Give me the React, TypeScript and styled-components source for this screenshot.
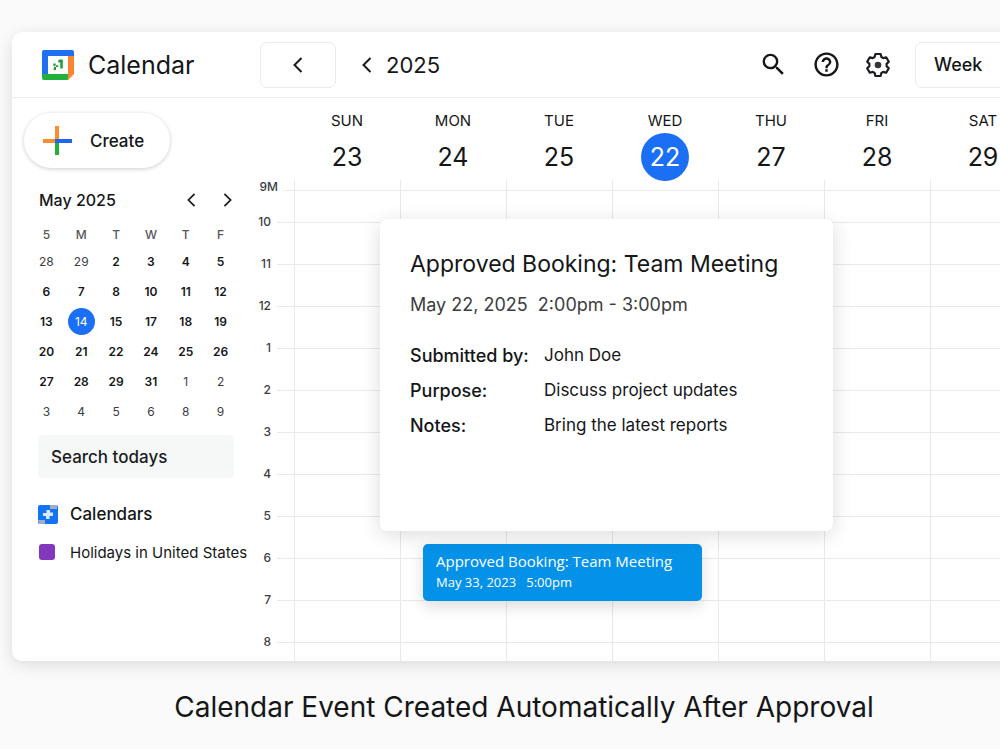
import React from "react";
import styled, { createGlobalStyle, css } from "styled-components";
import { MdSearch, MdHelpOutline } from "react-icons/md";

const FONT = `Inter, "Liberation Sans", sans-serif`;
const BLUE = "#1a6ff5";
const LINE = "#e9e9ea";

const GlobalStyle = createGlobalStyle`
  * { box-sizing: border-box; }
  body {
    margin: 0;
    background: #fafafa;
    color: #151618;
    font-family: ${FONT};
    overflow-x: hidden;
  }
  button, input, select { font: inherit; color: inherit; }
  h1, h2, p, dl, dd { margin: 0; font-weight: 400; }
`;

const Page = styled.div`
  overflow: hidden;
  padding: 32px 0 20px;
`;

/* The window runs past the right edge of the page. */
const Stage = styled.div`
  margin: 0 -36px 0 12px;
`;

const Window = styled.main`
  background: #fff;
  border-radius: 10px;
  box-shadow: 0 4px 16px rgba(0, 0, 0, 0.12);
  overflow: hidden;
`;

const Header = styled.header`
  display: flex;
  align-items: center;
  height: 66px;
  padding-left: 30px;
  border-bottom: 1px solid #eeeeef;
`;

const Brand = styled.div`
  display: flex;
  align-items: center;
  gap: 14px;
  width: 218px;
  flex: none;
`;

const BrandName = styled.h1`
  font-size: 25px;
  line-height: 32px;
`;

const IconButton = styled.button`
  display: grid;
  place-items: center;
  padding: 0;
  border: 0;
  background: none;
  cursor: pointer;
`;

const BoxButton = styled(IconButton)`
  width: 76px;
  height: 46px;
  border: 1px solid #ebebed;
  border-radius: 7px;
  background: #fff;
`;

const YearNav = styled.div`
  display: flex;
  align-items: center;
  gap: 14px;
  margin-left: 26px;
  font-size: 22px;
`;

const Tools = styled.div`
  display: flex;
  align-items: center;
  gap: 24px;
  margin-left: auto;
`;

const ViewSelect = styled.select`
  appearance: none;
  width: 121px;
  height: 46px;
  padding: 0 18px;
  border: 1px solid #ebebed;
  border-radius: 7px 0 0 7px;
  background: #fff;
  font-size: 18px;
  font-weight: 500;
`;

const Content = styled.div`
  display: flex;
`;

const Sidebar = styled.aside`
  width: 238px;
  flex: none;
  padding: 15px 0 0 12px;
`;

const CreateButton = styled.button`
  display: flex;
  align-items: center;
  gap: 18px;
  width: 146px;
  height: 55px;
  padding: 0 18px;
  border: 0;
  border-radius: 28px;
  background: #fff;
  box-shadow: 0 1px 4px rgba(0, 0, 0, 0.2);
  font-size: 17px;
  font-weight: 500;
  cursor: pointer;
`;

const MonthBar = styled.div`
  display: flex;
  align-items: center;
  gap: 27px;
  height: 24px;
  margin: 20px 18px 0 15px;
`;

const MonthName = styled.h2`
  flex: 1;
  font-size: 16px;
  font-weight: 500;
`;

const MiniCalendar = styled.table`
  width: 209px;
  margin: 10px 0 0 5px;
  border-collapse: collapse;
  table-layout: fixed;
  text-align: center;
  font-size: 12px;

  th, td { padding: 0; }
  th { height: 24px; font-weight: 500; color: #55565a; }
  td { height: 30px; }
`;

const MiniDay = styled.span<{ $muted?: boolean; $active?: boolean }>`
  display: grid;
  place-items: center;
  width: 27px;
  height: 27px;
  margin: 0 auto;
  border-radius: 50%;
  font-weight: ${(p) => (p.$muted || p.$active ? 400 : 600)};
  color: ${(p) => (p.$active ? "#fff" : p.$muted ? "#3c3d41" : "#151618")};
  background: ${(p) => (p.$active ? BLUE : "transparent")};
`;

const SearchInput = styled.input`
  display: block;
  width: 196px;
  height: 43px;
  margin: 9px 0 0 14px;
  padding: 0 13px;
  border: 0;
  border-radius: 5px;
  background: #f6f8f8;
  font-size: 17px;
  font-weight: 500;

  &::placeholder { color: #1b1c1f; opacity: 1; }
`;

const CalendarList = styled.ul`
  display: flex;
  flex-direction: column;
  gap: 14px;
  margin: 24px 0 0;
  padding: 0 0 0 14px;
  list-style: none;
`;

const CalendarItem = styled.li<{ $strong?: boolean }>`
  display: grid;
  grid-template-columns: 20px auto;
  column-gap: 12px;
  align-items: center;
  height: 24px;
  white-space: nowrap;
  font-size: ${(p) => (p.$strong ? 17 : 15)}px;
  font-weight: ${(p) => (p.$strong ? 500 : 400)};
`;

const Swatch = styled.span`
  width: 16px;
  height: 16px;
  margin-left: 1px;
  border-radius: 3px;
  background: #8238bd;
`;

const Week = styled.section`
  flex: 1;
  min-width: 0;
`;

const DayHeads = styled.div`
  display: grid;
  grid-template-columns: repeat(7, 1fr);
  height: 82px;
  padding: 13px 0 0 44px;
`;

const DayHead = styled.div`
  display: flex;
  flex-direction: column;
  align-items: center;
  gap: 2px;
  font-size: 15px;
  line-height: 20px;
`;

const DayNumber = styled.span<{ $active?: boolean }>`
  display: grid;
  place-items: center;
  width: 48px;
  height: 48px;
  border-radius: 50%;
  font-size: 25px;
  ${(p) => p.$active && css`background: ${BLUE}; color: #fff;`}
`;

const Schedule = styled.div`
  position: relative;
  display: grid;
  height: 481px;
  overflow: hidden;
`;

const Columns = styled.div`
  grid-area: 1 / 1;
  display: grid;
  grid-template-columns: repeat(7, 1fr);
  padding-left: 44px;
`;

const Column = styled.div`
  border-left: 1px solid ${LINE};
`;

const Hours = styled.div`
  grid-area: 1 / 1;
`;

const Hour = styled.div<{ $first?: boolean }>`
  display: flex;
  align-items: center;
  gap: 6px;
  height: ${(p) => (p.$first ? 21 : 42)}px;

  &::after {
    content: "";
    flex: 1;
    height: 1px;
    background: ${LINE};
  }
`;

const HourLabel = styled.span<{ $first?: boolean }>`
  width: ${(p) => (p.$first ? 28 : 21)}px;
  align-self: ${(p) => (p.$first ? "flex-start" : "center")};
  text-align: right;
  font-size: 12px;
  line-height: 14px;
  font-weight: 500;
  color: #3c3d41;
`;

const EventChip = styled.article`
  position: absolute;
  top: 364px;
  left: 173px;
  width: 279px;
  padding: 6px 13px 9px;
  border-radius: 5px;
  background: #0491e8;
  color: #fff;
  box-shadow: 0 5px 16px rgba(0, 0, 0, 0.14);
  font-family: "Open Sans", "Noto Sans", sans-serif;
  font-size: 13px;
  line-height: 19px;
  white-space: pre;
`;

const EventTitle = styled.p`
  && { font-weight: 500; }
  font-size: 15px;
  line-height: 23px;
`;

const Popup = styled.article`
  position: absolute;
  top: 39px;
  left: 130px;
  width: 453px;
  height: 312px;
  padding: 28px 30px;
  border-radius: 7px;
  background: #fff;
  box-shadow: 0 4px 20px rgba(0, 0, 0, 0.14);
`;

const PopupTitle = styled.h2`
  font-size: 23px;
  line-height: 34px;
  white-space: nowrap;
`;

const PopupTime = styled.p`
  margin-top: 10px;
  font-size: 18px;
  line-height: 28px;
  color: #3c3d41;
  white-space: pre;
`;

const Details = styled.dl`
  display: grid;
  grid-template-columns: 134px 1fr;
  margin-top: 19px;
  font-size: 17px;
  line-height: 35px;
  white-space: nowrap;

  dt { font-size: 18px; font-weight: 500; }
`;

const Caption = styled.p`
  margin-top: 26px;
  text-align: center;
  font-size: 28px;
  line-height: 40px;
`;

const Chevron = ({ right, size = 16, label }: { right?: boolean; size?: number; label: string }) => (
  <svg width={size / 2 + 2} height={size} viewBox="0 0 10 16" fill="none" stroke="#1b1c1f" strokeWidth="2" role="img" aria-label={label}>
    <path d={right ? "M1.5 1 8.5 8l-7 7" : "M8.5 1l-7 7 7 7"} />
  </svg>
);

const Logo = () => (
  <svg width="32" height="30" viewBox="0 0 32 30" aria-hidden="true">
    <path d="M2 0h28a2 2 0 0 1 2 2v4H6v18H0V2a2 2 0 0 1 2-2z" fill="#1f6ff2" />
    <path d="M0 24h26v6H2a2 2 0 0 1-2-2z" fill="#23b03a" />
    <path d="M26 6h6v18l-6 6z" fill="#fb8433" />
    <path d="M6 6h20v18H6z" fill="#fff" />
    <path d="M11.300 13.500h2.400v2.300h-2.400zM12 16.700h2V20h-2.500v-1.400h.5zM14 15.200h2.200V17H14zM16.300 10l2-.5h2.500v9h-2.500v-6h-2z" fill="#1f9e36" />
  </svg>
);

const Plus = () => (
  <svg width="30" height="29" viewBox="0 0 30 29" aria-hidden="true">
    <path d="M13 0h4v13h-4zM1 13h12v4H1z" fill="#fb8d2e" />
    <path d="M13 16h4v13h-4z" fill="#23b03a" />
    <path d="M13 13h17v4H13z" fill="#1f66f0" />
  </svg>
);

const Gear = () => (
  <svg width="26" height="26" viewBox="0 0 26 26" fill="none" stroke="#1b1c1f" strokeWidth="2.200" strokeLinejoin="round" aria-hidden="true">
    <path d="M9.600 5 10.400 2h5.200l.8 3 1.800 1.100 3-.8 2.600 4.500-2.200 2.100v2.200l2.200 2.100-2.600 4.500-3-.8-1.800 1.100-.8 3h-5.200l-.8-3-1.800-1.100-3 .8-2.600-4.500 2.200-2.100v-2.200L2.200 9.800l2.600-4.500 3 .8z" />
    <circle cx="13" cy="13" r="3.300" fill="#33353a" stroke="none" />
  </svg>
);

const CalendarsIcon = () => (
  <svg width="20" height="19" viewBox="0 0 20 19" aria-hidden="true">
    <rect width="20" height="19" rx="2" fill="#1273f3" />
    <path d="M12 0h7v4h-7zM0 15h7v4H1.500z" fill="#a3adc4" />
    <path d="M8.500 5h3.500v2.500h3V11h-3.500v3H8v-3H5V8h3.500z" fill="#dce8ff" />
  </svg>
);

const DAYS: [string, number][] = [["SUN", 23], ["MON", 24], ["TUE", 25], ["WED", 22], ["THU", 27], ["FRI", 28], ["SAT", 29]];
const HOURS = ["9M", "10", "11", "12", "1", "2", "3", "4", "5", "6", "7", "8"];
const MINI_HEAD = ["5", "M", "T", "W", "T", "F"];
const MINI_ROWS = [
  [28, 29, 2, 3, 4, 5],
  [6, 7, 8, 10, 11, 12],
  [13, 14, 15, 17, 18, 19],
  [20, 21, 22, 24, 25, 26],
  [27, 28, 29, 31, 1, 2],
  [3, 4, 5, 6, 8, 9],
];
const isMuted = (row: number, col: number) =>
  (row === 0 && col < 2) || (row === 4 && col > 3) || row === 5;

export default function App() {
  return (
    <Page>
      <GlobalStyle />
      <Stage>
        <Window>
          <Header>
            <Brand>
              <Logo />
              <BrandName>Calendar</BrandName>
            </Brand>
            <BoxButton><Chevron label="Previous" /></BoxButton>
            <YearNav>
              <IconButton><Chevron label="Previous year" /></IconButton>
              <span>2025</span>
            </YearNav>
            <Tools>
              <IconButton aria-label="Search"><MdSearch size={29} /></IconButton>
              <IconButton aria-label="Help"><MdHelpOutline size={29} /></IconButton>
              <IconButton aria-label="Settings"><Gear /></IconButton>
              <ViewSelect aria-label="View"><option>Week</option></ViewSelect>
            </Tools>
          </Header>
          <Content>
            <Sidebar>
              <CreateButton><Plus />Create</CreateButton>
              <MonthBar>
                <MonthName>May 2025</MonthName>
                <IconButton><Chevron size={14} label="Previous month" /></IconButton>
                <IconButton><Chevron size={14} right label="Next month" /></IconButton>
              </MonthBar>
              <MiniCalendar>
                <thead>
                  <tr>{MINI_HEAD.map((d, i) => <th key={i}>{d}</th>)}</tr>
                </thead>
                <tbody>
                  {MINI_ROWS.map((row, r) => (
                    <tr key={r}>
                      {row.map((d, c) => (
                        <td key={c}>
                          <MiniDay $muted={isMuted(r, c)} $active={d === 14}>{d}</MiniDay>
                        </td>
                      ))}
                    </tr>
                  ))}
                </tbody>
              </MiniCalendar>
              <SearchInput aria-label="Search todays" placeholder="Search todays" />
              <CalendarList>
                <CalendarItem $strong><CalendarsIcon />Calendars</CalendarItem>
                <CalendarItem><Swatch />Holidays in United States</CalendarItem>
              </CalendarList>
            </Sidebar>
            <Week>
              <DayHeads>
                {DAYS.map(([name, n]) => (
                  <DayHead key={name}>
                    {name}
                    <DayNumber $active={name === "WED"}>{n}</DayNumber>
                  </DayHead>
                ))}
              </DayHeads>
              <Schedule>
                <Columns>{DAYS.map(([name]) => <Column key={name} />)}</Columns>
                <Hours>
                  {HOURS.map((h, i) => (
                    <Hour key={h} $first={i === 0}>
                      <HourLabel $first={i === 0}>{h}</HourLabel>
                    </Hour>
                  ))}
                </Hours>
                <EventChip>
                  <EventTitle>Approved Booking: Team Meeting</EventTitle>
                  <p>{"May 33, 2023   5:00pm"}</p>
                </EventChip>
                <Popup>
                  <PopupTitle>Approved Booking: Team Meeting</PopupTitle>
                  <PopupTime>{"May 22, 2025  2:00pm - 3:00pm"}</PopupTime>
                  <Details>
                    <dt>Submitted by:</dt><dd>John Doe</dd>
                    <dt>Purpose:</dt><dd>Discuss project updates</dd>
                    <dt>Notes:</dt><dd>Bring the latest reports</dd>
                  </Details>
                </Popup>
              </Schedule>
            </Week>
          </Content>
        </Window>
        <Caption>Calendar Event Created Automatically After Approval</Caption>
      </Stage>
    </Page>
  );
}
